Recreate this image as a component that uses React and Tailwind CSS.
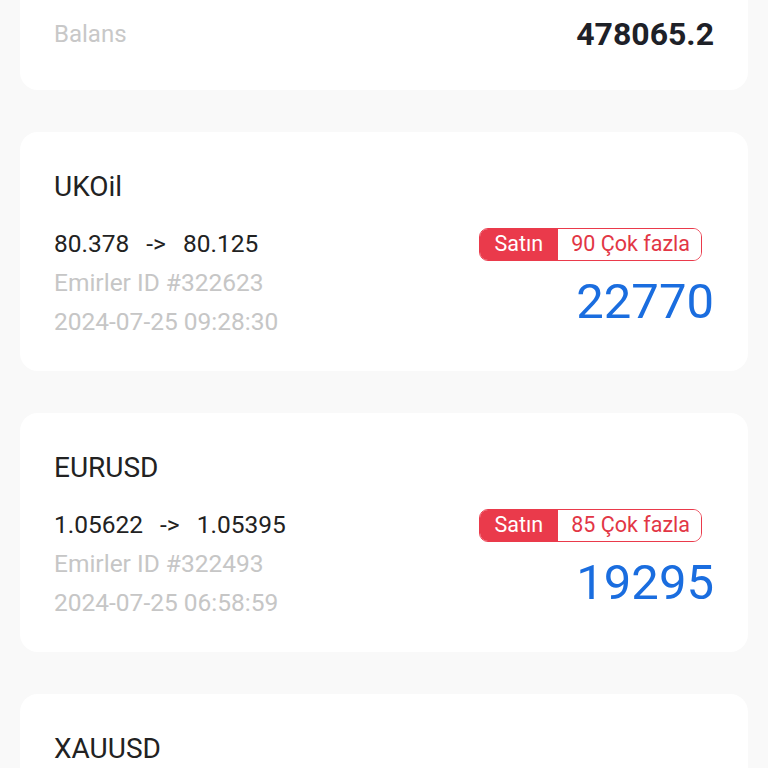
const orders = [
  {
    symbol: "UKOil",
    open: "80.378",
    close: "80.125",
    id: "322623",
    time: "2024-07-25 09:28:30",
    side: "Satın",
    lots: "90 Çok fazla",
    profit: "22770",
  },
  {
    symbol: "EURUSD",
    open: "1.05622",
    close: "1.05395",
    id: "322493",
    time: "2024-07-25 06:58:59",
    side: "Satın",
    lots: "85 Çok fazla",
    profit: "19295",
  },
];

function OrderCard({ order }) {
  return (
    <div className="bg-white rounded-[18px] px-[34px] pt-[37px] pb-[30px]">
      <div className="text-[28px] leading-[36px] text-[#222222]">{order.symbol}</div>
      <div className="mt-[19px] flex justify-between">
        <div className="flex flex-col text-[24.5px] leading-[39px]">
          <div className="text-[#222222]">
            <span>{order.open}</span>
            <span className="mx-[17px]">-&gt;</span>
            <span>{order.close}</span>
          </div>
          <div className="text-[#c6c6c6]">Emirler ID #{order.id}</div>
          <div className="text-[#c6c6c6]">{order.time}</div>
        </div>
        <div className="flex flex-col items-end">
          <div className="mt-[4px] mr-[12px] flex h-[33px] items-stretch overflow-hidden rounded-[9px] border border-[#ea3a4b] text-[21.5px]">
            <span className="flex items-center bg-[#ea3a4b] px-[15px] text-white">{order.side}</span>
            <span className="flex items-center bg-white pl-[13px] pr-[11px] text-[#e23645]">{order.lots}</span>
          </div>
          <div className="mt-[12px] text-[49px] leading-[58px] text-[#1a6ddf]">{order.profit}</div>
        </div>
      </div>
    </div>
  );
}

export default function App() {
  return (
    <div
      className="min-h-screen overflow-hidden bg-[#f9f9f9] px-5"
      style={{ fontFamily: "Roboto, 'Noto Sans', sans-serif" }}
    >
      <div className="-mt-[19px] flex flex-col gap-[42px]">
        {/* Balance */}
        <div className="bg-white rounded-[18px] px-[34px] pt-[35px] pb-[38px] flex items-center justify-between">
          <div className="text-[24px] leading-[36px] text-[#c8c8c8]">Balans</div>
          <div className="text-[32px] leading-[36px] font-bold text-[#1e2128]">478065.2</div>
        </div>

        {orders.map((o) => (
          <OrderCard key={o.id} order={o} />
        ))}

        <div className="bg-white rounded-[18px] px-[34px] pt-[37px] h-[239px]">
          <div className="text-[28px] leading-[36px] text-[#222222]">XAUUSD</div>
        </div>
      </div>
    </div>
  );
}
